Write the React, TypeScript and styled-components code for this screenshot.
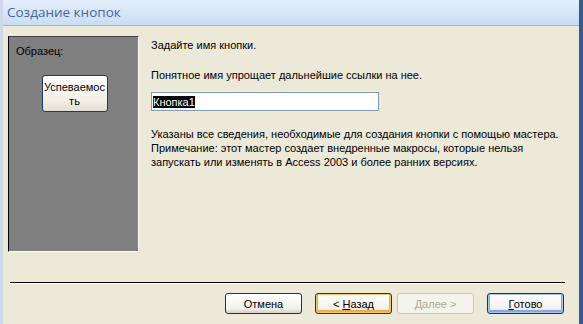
import styled, { createGlobalStyle } from "styled-components";

const GlobalStyle = createGlobalStyle`
  html, body {
    margin: 0;
    padding: 0;
    background: #ece9d8;
  }
`;

function App() {
    return (
        <Window>
            <GlobalStyle/>
            <TitleBar>Создание кнопок</TitleBar>
            <Body>
                <Content>
                    <SamplePanel>
                        <SampleLabel>Образец:</SampleLabel>
                        <SampleButton>Успеваемос<br/>ть</SampleButton>
                    </SamplePanel>
                    <Form>
                        <Text>Задайте имя кнопки.</Text>
                        <Text top={16}>Понятное имя упрощает дальнейшие ссылки на нее.</Text>
                        <NameInput>
                            <Selected>Кнопка1</Selected>
                        </NameInput>
                        <Text top={16}>
                            Указаны все сведения, необходимые для создания кнопки с помощью мастера.<br/>
                            Примечание: этот мастер создает внедренные макросы, которые нельзя<br/>
                            запускать или изменять в Access 2003 и более ранних версиях.
                        </Text>
                    </Form>
                </Content>
                <Separator/>
                <Buttons>
                    <Button>Отмена</Button>
                    <Button variant="focused" gap={13}><span>&lt; <u>Н</u>азад</span></Button>
                    <Button variant="disabled"><span><u>Д</u>алее &gt;</span></Button>
                    <Button variant="default" gap={13}><span><u>Г</u>отово</span></Button>
                </Buttons>
            </Body>
        </Window>
    );
}

export default App;

type ButtonProps = {
    variant?: "focused" | "disabled" | "default"
    gap?: number
}

const Window = styled.div`
  width: 583px;
  height: 324px;
  box-sizing: border-box;
  display: flex;
  flex-direction: column;
  background: #ece9d8;
  border-left: 3px solid #cdd9e6;
  border-right: 4px solid #345b8f;
  font-family: "Liberation Sans", Arial, sans-serif;
  font-size: 11px;
  color: #000;
  overflow: hidden;
`;

const TitleBar = styled.div`
  height: 26px;
  box-sizing: border-box;
  padding: 4px 0 0 4px;
  background: linear-gradient(#e4eefb, #c9ddf4);
  border-bottom: 1px solid #9fb6d2;
  color: #46679a;
  font-family: "Open Sans", "Liberation Sans", sans-serif;
  font-size: 13.5px;
  line-height: 17px;
`;

const Body = styled.div`
  flex: 1;
  display: flex;
  flex-direction: column;
  padding: 10px 0 0 5px;
`;

const Content = styled.div`
  display: flex;
  gap: 12px;
  height: 216px;
`;

const SamplePanel = styled.div`
  flex-shrink: 0;
  width: 131px;
  height: 216px;
  box-sizing: border-box;
  display: flex;
  flex-direction: column;
  align-items: center;
  background: #808080;
  border-top: 1px solid #404040;
  border-left: 1px solid #000;
  border-right: 1px solid #fff;
  border-bottom: 1px solid #fff;
`;

const SampleLabel = styled.div`
  align-self: flex-start;
  padding: 7px 0 0 7px;
  line-height: 14px;
`;

const SampleButton = styled.div`
  margin: 17px 0 0 2px;
  width: 66px;
  height: 37px;
  box-sizing: border-box;
  border: 1px solid #1c3a66;
  border-radius: 3px;
  background: linear-gradient(#ffffff, #f2f0e8 70%, #e2dfd2);
  text-align: center;
  line-height: 14px;
  padding-top: 4px;
  overflow: hidden;
`;

const Form = styled.div`
  display: flex;
  flex-direction: column;
  padding-top: 2px;
`;

const Text = styled.div<{ top?: number }>`
  margin-top: ${({top}) => top ?? 0}px;
  line-height: 14px;
  white-space: nowrap;
`;

const NameInput = styled.div`
  margin-top: 10px;
  width: 228px;
  height: 19px;
  box-sizing: border-box;
  border: 1px solid #7f9db9;
  background: #fff;
  padding: 2px 0 0 1px;
  line-height: 14px;
`;

const Selected = styled.span`
  background: #000;
  color: #fff;
`;

const Separator = styled.div`
  margin: 30px 14px 0 2px;
  height: 1px;
  background: #000;
  border-bottom: 1px solid #fff;
`;

const Buttons = styled.div`
  display: flex;
  justify-content: flex-end;
  gap: 5px;
  margin: 9px 15px 0 0;
`;

const Button = styled.div<ButtonProps>`
  width: 77px;
  height: 21px;
  box-sizing: border-box;
  margin-left: ${({gap}) => (gap ? gap - 5 : 0)}px;
  border: 1px solid ${({variant}) => (variant === "disabled" ? "#c9c7ba" : "#003c74")};
  border-radius: 3px;
  background: ${({variant}) => (variant === "disabled" ? "#f5f4ea" : "linear-gradient(#ffffff, #f3f2ec 75%, #d6d0c5)")};
  box-shadow: ${({variant}) => variant === "focused"
        ? "inset 0 0 0 1px #f9c56a, inset 0 -1px 0 2px #f0b040"
        : variant === "default" ? "inset 0 0 0 1px #a9c3ec, inset 0 -1px 0 2px #86a6e0" : "none"};
  color: ${({variant}) => (variant === "disabled" ? "#aca899" : "#000")};
  display: flex;
  align-items: center;
  justify-content: center;
  line-height: 14px;
`;
